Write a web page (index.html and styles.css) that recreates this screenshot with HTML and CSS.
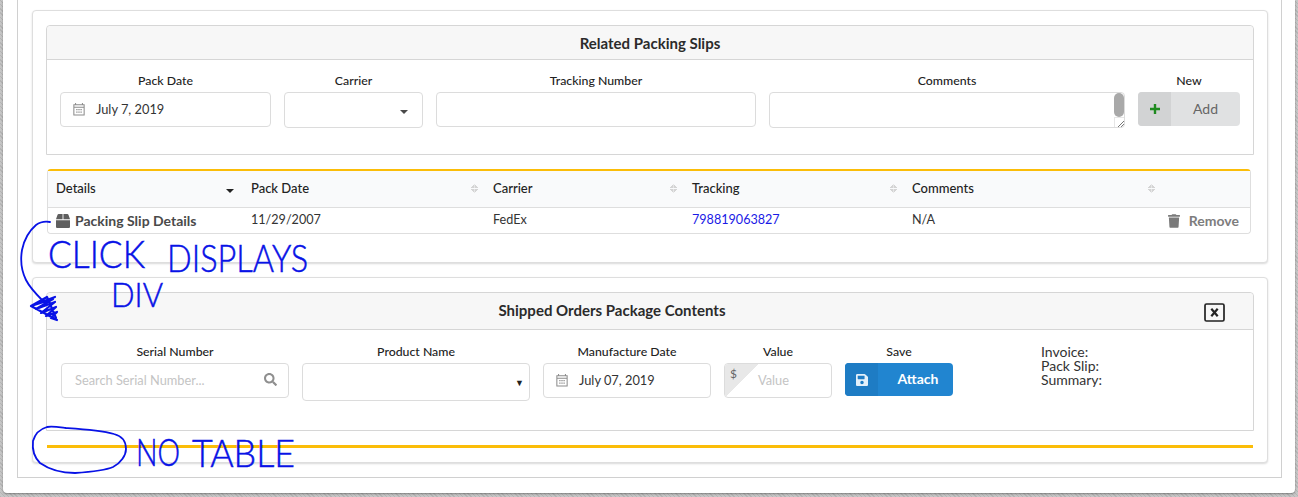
FILE: index.html
```html
<!DOCTYPE html>
<html lang="en">
<head>
<meta charset="utf-8">
<title>Packing Slips</title>
<link rel="stylesheet" href="styles.css">
</head>
<body>
<div class="sheet">
  <div class="box">
    <section class="card card-slips">
      <div class="panel">
        <h3 class="panel-head">Related Packing Slips</h3>
        <div class="panel-body form-slips">
          <div class="field"><label>Pack Date</label>
            <div class="input date-input">
              <svg class="cal" viewBox="0 0 14 16"><path d="M3 1v2M11 1v2M1 3h12v12H1zM1 6h12" fill="none" stroke="#8c8c8c" stroke-width="1.2"/><path d="M3.5 8h2v1.5h-2zM6 8h2v1.5H6zM8.500 8h2v1.500h-2zM3.500 11h2v1.500h-2zM6 11h2v1.500H6zM8.500 11h2v1.500h-2z" fill="#a8a8a8"/></svg>
              <span>July 7, 2019</span>
            </div>
          </div>
          <div class="field"><label>Carrier</label>
            <div class="input select-input tall"><i class="caret-down"></i></div>
          </div>
          <div class="field"><label>Tracking Number</label><div class="input"></div></div>
          <div class="field"><label>Comments</label>
            <div class="input tall textarea"><span class="thumb"></span><span class="resizer"></span></div>
          </div>
          <div class="field"><label>New</label>
            <button class="btn btn-add" type="button"><span class="btn-icon"><svg viewBox="0 0 12 12"><path d="M6 1v10M1 6h10" stroke="#1f8a1f" stroke-width="2.400" fill="none"/></svg></span><span class="btn-text">Add</span></button>
          </div>
        </div>
      </div>
      <table class="slips">
        <colgroup><col class="c1"><col class="c2"><col class="c3"><col class="c4"><col class="c5"><col class="c6"></colgroup>
        <thead>
          <tr>
            <th><div class="th"><span>Details</span><i class="caret-down dark"></i></div></th>
            <th><div class="th"><span>Pack Date</span><i class="sort"></i></div></th>
            <th><div class="th"><span>Carrier</span><i class="sort"></i></div></th>
            <th><div class="th"><span>Tracking</span><i class="sort"></i></div></th>
            <th><div class="th"><span>Comments</span><i class="sort"></i></div></th>
            <th></th>
          </tr>
        </thead>
        <tbody>
          <tr>
            <td class="details"><svg class="box-icon" viewBox="0 0 512 512"><path fill="#5f5f5f" d="M509.5 184.600L458.900 32.800C452.400 13.200 434.100 0 413.400 0H272v192h238.700c-.4-2.500-.4-5-1.200-7.400zM240 0H98.600c-20.700 0-39 13.200-45.500 32.800L2.500 184.600c-.8 2.400-.8 4.900-1.200 7.400H240V0zM0 224v240c0 26.500 21.500 48 48 48h416c26.500 0 48-21.500 48-48V224H0z"/></svg>Packing Slip Details</td>
            <td>11/29/2007</td>
            <td>FedEx</td>
            <td><a href="#">798819063827</a></td>
            <td>N/A</td>
            <td class="remove"><svg class="trash" viewBox="0 0 448 512"><path fill="#7a7a7a" d="M432 32H312l-9.400-18.700A24 24 0 0 0 281.100 0H166.800a23.720 23.720 0 0 0-21.400 13.300L136 32H16A16 16 0 0 0 0 48v32a16 16 0 0 0 16 16h416a16 16 0 0 0 16-16V48a16 16 0 0 0-16-16zM53.200 467a48 48 0 0 0 47.900 45h245.800a48 48 0 0 0 47.900-45L416 128H32z"/></svg>Remove</td>
          </tr>
        </tbody>
      </table>
    </section>

    <section class="card card-contents">
      <div class="panel">
        <h3 class="panel-head head-tall">Shipped Orders Package Contents
          <svg class="close" viewBox="0 0 21 19"><rect x="1" y="1" width="19" height="17" rx="1.500" fill="none" stroke="#222" stroke-width="1.700"/><path d="M7.300 5.800l6.400 7.400M13.700 5.800l-6.400 7.400" stroke="#222" stroke-width="2.200" fill="none"/></svg>
        </h3>
        <div class="panel-body form-contents">
          <div class="field"><label>Serial Number</label>
            <div class="input search-input"><span class="ph">Search Serial Number...</span>
              <svg class="search" viewBox="0 0 512 512"><path fill="#8f8f8f" d="M505 442.700L405.300 343c-4.500-4.500-10.600-7-17-7H372c27.600-35.300 44-79.700 44-128C416 93.100 322.900 0 208 0S0 93.100 0 208s93.100 208 208 208c48.300 0 92.700-16.400 128-44v16.300c0 6.400 2.500 12.500 7 17l99.700 99.700c9.400 9.400 24.600 9.400 33.900 0l28.300-28.300c9.400-9.400 9.400-24.600.1-34zM208 336c-70.700 0-128-57.200-128-128 0-70.700 57.200-128 128-128 70.700 0 128 57.200 128 128 0 70.700-57.200 128-128 128z"/></svg>
            </div>
          </div>
          <div class="field"><label>Product Name</label>
            <div class="input select-input tall2"><span class="native-arrow">▼</span></div>
          </div>
          <div class="field"><label>Manufacture Date</label>
            <div class="input date-input">
              <svg class="cal" viewBox="0 0 14 16"><path d="M3 1v2M11 1v2M1 3h12v12H1zM1 6h12" fill="none" stroke="#8c8c8c" stroke-width="1.200"/><path d="M3.500 8h2v1.500h-2zM6 8h2v1.500H6zM8.500 8h2v1.500h-2zM3.500 11h2v1.500h-2zM6 11h2v1.500H6zM8.500 11h2v1.500h-2z" fill="#a8a8a8"/></svg>
              <span>July 07, 2019</span>
            </div>
          </div>
          <div class="field"><label>Value</label>
            <div class="input value-input"><span class="corner"></span><span class="dollar">$</span><span class="ph">Value</span></div>
          </div>
          <div class="field"><label>Save</label>
            <button class="btn btn-attach" type="button"><span class="btn-icon"><svg viewBox="0 0 448 512"><path fill="#e3f0fa" d="M433.941 129.941l-83.882-83.882A48 48 0 0 0 316.118 32H48C21.490 32 0 53.490 0 80v352c0 26.510 21.490 48 48 48h352c26.510 0 48-21.490 48-48V163.882a48 48 0 0 0-14.059-33.941zM224 416c-35.346 0-64-28.654-64-64 0-35.346 28.654-64 64-64s64 28.654 64 64c0 35.346-28.654 64-64 64zm96-304.520V212c0 6.627-5.373 12-12 12H76c-6.627 0-12-5.373-12-12V108c0-6.627 5.373-12 12-12h228.520c3.183 0 6.235 1.264 8.485 3.515l3.480 3.480A11.996 11.996 0 0 1 320 111.480z"/></svg></span><span class="btn-text">Attach</span></button>
          </div>
          <div class="summary">Invoice:<br>Pack Slip:<br>Summary:</div>
        </div>
      </div>
      <div class="empty-rule"></div>
    </section>
  </div>
</div>

<svg class="ink" viewBox="0 0 1298 497" width="1298" height="497">
  <path class="ink-line" d="M50 222 C44 221 40 222 36 225 C29 231 24 240 22 250 C20 262 22 272 26 280 C30 288 36 294 43 301"/>
  <path class="ink-line ink-head" d="M55 297 L31 306 L53 299 L36 309 L55 302 L41 313 L56 307 L46 316 L57 312 L51 318 L57 320 L31 306 L47 297 L56 318"/>
  <path class="ink-line" d="M47 427 C40 429 35 434 33 441 C32 450 35 458 40 463 C50 470 62 473 75 473 C90 472 104 471 113 467 C121 463 126 455 126 449 C126 441 122 436 114 434 C100 430 82 429 66 428 C58 427 52 426 47 427 Z"/>
  <text class="ink-text" x="48" y="268" textLength="97" lengthAdjust="spacingAndGlyphs">CLICK</text>
  <text class="ink-text" x="167" y="272" textLength="141" lengthAdjust="spacingAndGlyphs">DISPLAYS</text>
  <text class="ink-text ink-small" x="111" y="307" textLength="52" lengthAdjust="spacingAndGlyphs">DIV</text>
  <text class="ink-text" x="136" y="466" textLength="44" lengthAdjust="spacingAndGlyphs">NO</text>
  <text class="ink-text" x="192" y="467" textLength="103" lengthAdjust="spacingAndGlyphs">TABLE</text>
</svg>
</body>
</html>
```
FILE: styles.css
```css
* { box-sizing: border-box; }
html, body { margin: 0; padding: 0; height: 497px; overflow: hidden; }
body {
  position: relative;
  font-family: "Lato", "Liberation Sans", sans-serif;
  font-size: 13px;
  color: #212121;
  background: repeating-linear-gradient(45deg, #b5b5b5 0 1px, #c6c6c6 1px 3px);
}
.sheet {
  margin-left: 3px;
  width: 1292px;
  height: 493px;
  padding: 0 13px 0 14px;
  background: #fff;
  border-radius: 0 0 4px 4px;
  box-shadow: 0 1px 2px rgba(0,0,0,.35);
}
.box {
  height: 478px;
  padding: 10px 13px 0 14px;
  border: 1px solid #d0d0d0;
  border-top: 0;
}
.card {
  background: #fff;
  border: 1px solid #dedede;
  border-radius: 4px;
  padding: 14px 13px 0;
  box-shadow: 0 1px 2px rgba(0,0,0,.15);
}
.card-slips { height: 253px; margin-bottom: 14px; }
.card-contents { height: 186px; }
.panel {
  border: 1px solid #d6d6d6;
  border-radius: 4px 4px 0 0;
}
.panel-head {
  position: relative;
  margin: 0;
  height: 34px;
  line-height: 35px;
  text-align: center;
  font-size: 15px;
  font-weight: 700;
  color: #2b2b2b;
  background: #f7f7f7;
  border-bottom: 1px solid #d6d6d6;
  border-radius: 4px 4px 0 0;
}
.head-tall { height: 37px; padding-right: 76px; line-height: 35px; }
.close { position: absolute; left: 1157px; top: 10px; width: 21px; height: 19px; }
.panel-body { display: grid; align-items: start; column-gap: 13px; }
.form-slips {
  height: 94px;
  padding: 13px 0 0 13px;
  grid-template-columns: 211px 139px 320px 356px 102px;
}
.form-contents {
  height: 100px;
  padding: 14px 0 0 14px;
  grid-template-columns: 228px 228px 168px 108px 108px 200px;
}
.field { display: flex; flex-direction: column; }
.field label {
  height: 16px;
  margin-bottom: 3px;
  line-height: 16px;
  text-align: center;
  font-size: 12.300px;
  font-weight: 500;
  color: #222;
}
.input {
  position: relative;
  display: flex;
  align-items: center;
  height: 35px;
  background: #fff;
  border: 1px solid #dcdcdc;
  border-radius: 4px;
  font-size: 12.800px;
  color: #333;
}
.tall { height: 36px; }
.tall2 { height: 38px; }
.date-input { padding: 0 0 2px 12px; }
.cal { width: 12px; height: 14px; margin-right: 11px; }
.select-input { justify-content: flex-end; }
.caret-down {
  display: block;
  width: 0;
  height: 0;
  border-left: 4px solid transparent;
  border-right: 4px solid transparent;
  border-top: 4.500px solid #4a4a4a;
}
.select-input .caret-down { margin: 3px 14px 0 0; }
.native-arrow { margin: 1px 5px 0 0; font-size: 9px; color: #222; }
.textarea { overflow: hidden; }
.thumb {
  position: absolute;
  top: 0;
  right: 0;
  width: 10px;
  height: 24px;
  background: #a9a9a9;
  border-radius: 5px;
}
.resizer {
  position: absolute;
  right: 0;
  bottom: 0;
  width: 10px;
  height: 10px;
  border: 1px solid #e6e6e6;
  border-width: 1px 0 0 1px;
  background: linear-gradient(135deg, transparent 66%, #777 66% 71%, transparent 71% 82%, #777 82% 87%, transparent 87%);
}
.btn {
  display: flex;
  align-items: stretch;
  width: 100%;
  height: 34px;
  padding: 0;
  border: 0;
  border-radius: 4px;
  overflow: hidden;
  font-family: inherit;
  font-size: 14px;
  font-weight: 700;
}
.btn-icon { display: flex; align-items: center; justify-content: center; width: 33px; }
.btn-text { flex: 1; line-height: 33px; text-align: center; }
.btn-add { background: #e0e1e2; color: #666; font-weight: 400; }
.btn-add .btn-icon { background: #d2d3d4; }
.btn-add svg { width: 12px; height: 12px; }
.btn-attach { height: 33px; background: #2185d0; color: #fff; }
.btn-attach .btn-icon { background: #1e7cc4; }
.btn-attach svg { width: 12px; height: 14px; }
.btn-attach .btn-text { padding-left: 5px; line-height: 32px; }
.search-input { justify-content: space-between; padding: 0 11px 2px 13px; }
.search { width: 13px; height: 13px; }
.ph { color: #c4c4c4; font-size: 12.800px; }
.value-input { padding: 0 0 2px 33px; overflow: hidden; }
.corner {
  position: absolute;
  left: 0;
  top: 0;
  width: 34px;
  height: 33px;
  background: linear-gradient(135deg, #e8e8e8 50%, transparent 50%);
}
.dollar { position: absolute; left: 5px; top: 2px; font-size: 12px; color: #666; }
.summary {
  margin-left: 75px;
  padding-top: 1px;
  line-height: 14px;
  font-size: 14px;
  color: #333;
}
.slips {
  width: 1204px;
  margin: 14px 0 0 1px;
  table-layout: fixed;
  border-collapse: separate;
  border-spacing: 0;
  border: 1px solid #dedede;
  border-top: 2px solid #fbbd08;
  border-radius: 4px;
  font-size: 12.600px;
}
.c1 { width: 195px; }
.c2 { width: 242px; }
.c3 { width: 199px; }
.c4 { width: 220px; }
.c5 { width: 258px; }
.c6 { width: 88px; }
.slips th {
  height: 37px;
  padding: 0 7px 3px 8px;
  background: #f9fafb;
  border-bottom: 1px solid #dedede;
  font-size: 13px;
  font-weight: 500;
  text-align: left;
  color: #222;
}
.th { display: flex; align-items: center; justify-content: space-between; }
.caret-down.dark { margin: 6px 2px 0 0; border-top-color: #222; }
.sort {
  display: block;
  width: 7px;
  height: 9px;
  margin-top: 2px;
  background:
    linear-gradient(to top left, #d4d4d4 50%, transparent 50%) 0 0 / 3.500px 4px no-repeat,
    linear-gradient(to top right, #d4d4d4 50%, transparent 50%) 3.500px 0 / 3.500px 4px no-repeat,
    linear-gradient(to bottom left, #d4d4d4 50%, transparent 50%) 0 5px / 3.500px 4px no-repeat,
    linear-gradient(to bottom right, #d4d4d4 50%, transparent 50%) 3.500px 5px / 3.500px 4px no-repeat;
}
.slips td {
  height: 25px;
  padding: 0 9px 2px 8px;
  color: #333;
  background: #fff;
  border-radius: 0 0 4px 4px;
  white-space: nowrap;
}
.slips td a { color: #1a1ae6; text-decoration: none; }
.slips td.details { font-size: 14px; font-weight: 700; color: #4a4a4a; padding-bottom: 1px; }
.box-icon { width: 14px; height: 14px; margin-right: 5px; vertical-align: -2px; }
.slips td.remove { font-size: 14px; font-weight: 700; color: #7d7d7d; text-align: right; padding: 0 11px 1px 0; }
.trash { width: 12px; height: 14px; margin-right: 9px; vertical-align: -2px; }
.empty-rule { height: 3px; margin: 14px 1px 0 1px; background: #fbbd08; }
.ink { position: absolute; left: 0; top: 0; pointer-events: none; }
.ink-line { fill: none; stroke: #0812e6; stroke-width: 1.800; stroke-linecap: round; stroke-linejoin: round; }
.ink-head { stroke-width: 2.200; }
.ink-text {
  font-family: "Lato", "Liberation Sans", sans-serif;
  font-size: 38px;
  font-weight: 300;
  fill: #0812e6;
  stroke: #0812e6;
  stroke-width: .5px;
}
.ink-small { font-size: 34px; }
```
